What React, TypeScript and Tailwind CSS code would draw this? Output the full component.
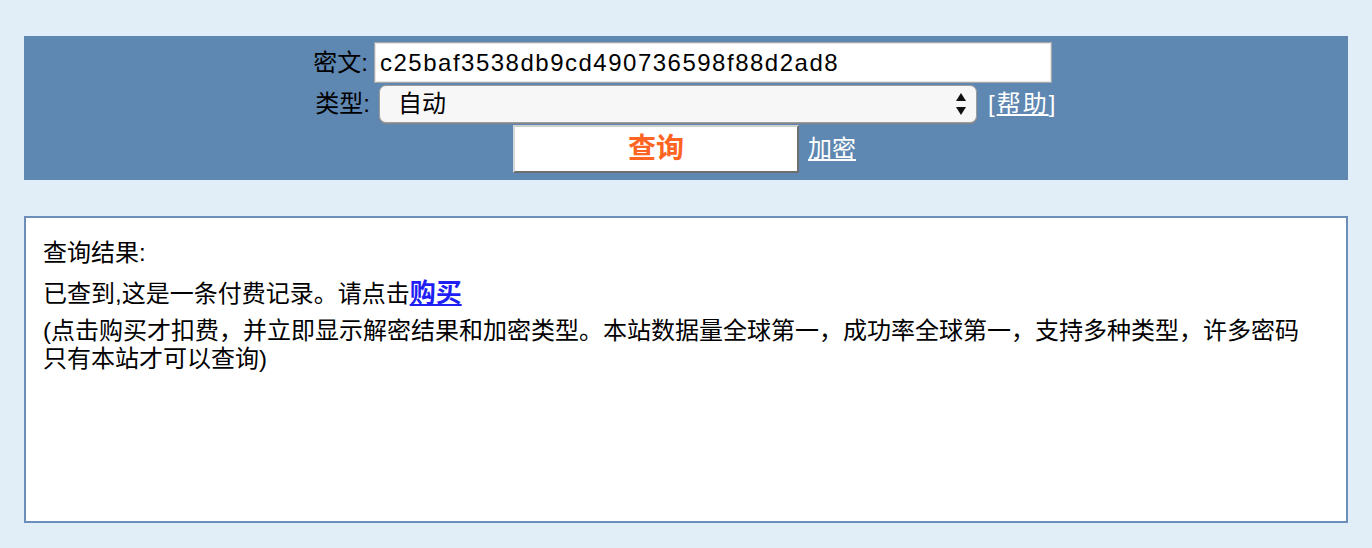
const font = "font-['Liberation_Sans','Noto_Sans_CJK_SC',sans-serif]";

const SelectArrows = () => (
  <svg width="10" height="22" viewBox="0 0 10 22" className="shrink-0">
    <path d="M5 0 L10 8 L0 8 Z" fill="#111" />
    <path d="M0 14 L10 14 L5 22 Z" fill="#111" />
  </svg>
);

export default function App() {
  return (
    <div className={`min-h-[548px] w-full bg-[#e1eef7] px-[24px] pt-[36px] pb-[25px] text-black ${font}`}>
      {/* search form */}
      <div className="bg-[#5e87b1] pt-[6px] pb-[7px] text-[24px]">
        <div className="flex h-[41px] items-center">
          <span className="w-[344px] text-right">密文:</span>
          <div className="ml-[6px] flex h-[41px] w-[678px] items-center border border-[#a8a8a8] bg-white pl-[5px] tracking-[1.5px] shadow-[inset_0_0_0_1px_#e6e6e6]">
            c25baf3538db9cd490736598f88d2ad8
          </div>
        </div>
        <div className="mt-[2px] flex h-[38px] items-center">
          <span className="w-[346px] text-right">类型:</span>
          <div className="ml-[9px] flex h-[38px] w-[598px] items-center justify-between rounded-[7px] border border-[#9c9c9c] bg-[#f7f7f7] pl-[18px] pr-[10px] shadow-[0_1px_1px_#8a8a8a]">
            <span>自动</span>
            <SelectArrows />
          </div>
          <span className="ml-[11px] tracking-[2px] text-white">
            [<span className="underline underline-offset-2">帮助</span>]
          </span>
        </div>
        <div className="mt-[2px] flex h-[48px] items-center">
          <div className="w-[489px]" />
          <div className="flex h-[48px] w-[286px] items-center justify-center border-2 border-t-[#cfcfcf] border-l-[#d8d8d8] border-r-[#6e6e6e] border-b-[#6e6e6e] bg-white text-[28px] font-bold text-[#ff6422]">
            查询
          </div>
          <span className="ml-[9px] text-white underline underline-offset-2">加密</span>
        </div>
      </div>

      {/* result */}
      <div className="mt-[36px] h-[307px] border-2 border-[#6b8fba] bg-white pl-[17px] pt-[15px] text-[24px]">
        <div className="leading-[40px]">查询结果:</div>
        <div className="leading-[40px]">
          已查到,这是一条付费记录。请点击
          <span className="text-[26px] font-bold text-[#1f1ff5] underline underline-offset-2">购买</span>
        </div>
        <div className="mt-[3px] pr-[30px] leading-[28px]">
          (点击购买才扣费，并立即显示解密结果和加密类型。本站数据量全球第一，成功率全球第一，支持多种类型，许多密码只有本站才可以查询)
        </div>
      </div>
    </div>
  );
}
